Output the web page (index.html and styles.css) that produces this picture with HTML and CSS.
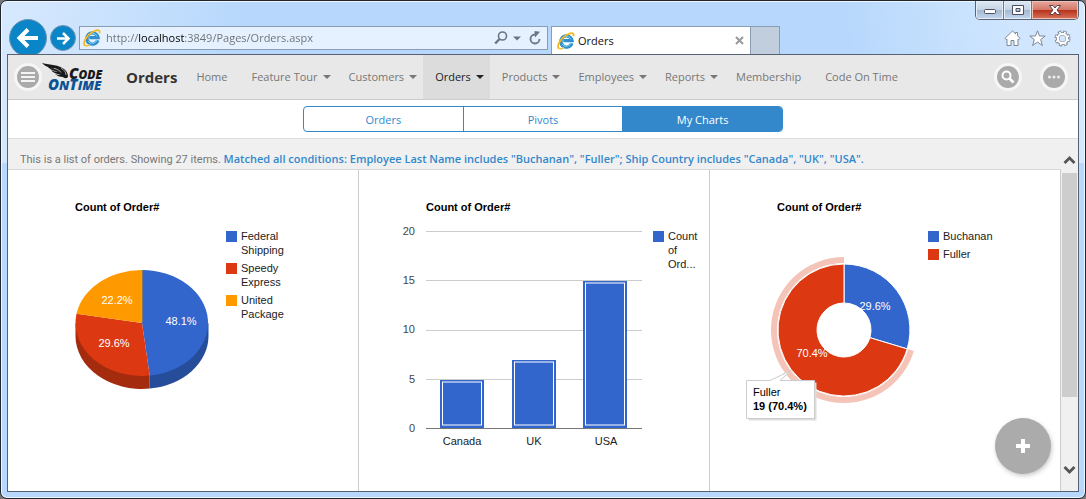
FILE: index.html
```html
<!DOCTYPE html>
<html lang="en">
<head>
<meta charset="utf-8">
<title>Orders</title>
<link rel="stylesheet" href="styles.css">
</head>
<body>
<svg class="defs" aria-hidden="true">
  <symbol id="ie" viewBox="0 0 18 18">
    <path d="M14.800 11.200 A5.600 5.600 0 1 1 15 8.600 H6.300" fill="none" stroke="#2d8fce" stroke-width="3.400"/>
    <path d="M14 11 A5 5 0 0 1 5 12 M4.800 7 A5 5 0 0 1 14 7.400" fill="none" stroke="#7fd0f5" stroke-width="1"/>
    <path d="M2.400 16.800 C-1.500 15 3.500 6.500 9.500 3 C14 .3 17.500 .5 16.400 4.300" fill="none" stroke="#f6b91c" stroke-width="1.800"/>
    <path d="M2.400 16.800 C4 17.300 6 16 7 15.200" fill="none" stroke="#f6b91c" stroke-width="1.200"/>
  </symbol>
</svg>
<div class="window">
  <header class="chrome">
    <div class="titlebar">
      <div class="window-controls">
        <button class="wc" aria-label="Minimize"><svg width="14" height="14"><rect x="1.500" y="6.500" width="11" height="4" rx="1" fill="#fff" stroke="#4b5163"/></svg></button>
        <button class="wc" aria-label="Maximize"><svg width="14" height="14"><path d="M1.500 2.500h11v9h-11z M5 5.500v3h4v-3z" fill="#fff" fill-rule="evenodd" stroke="#4b5163"/></svg></button>
        <button class="wc wc-close" aria-label="Close"><svg width="14" height="14"><path d="M1.500 2.500H5L7 5l2-2.500h3.500L9 7l3.500 4.500H9L7 9l-2 2.500H1.500L5 7z" fill="#fff" stroke="#5a3f4a"/></svg></button>
      </div>
    </div>
    <div class="toolbar">
      <button class="nav-button nav-back" aria-label="Back"><svg width="24" height="24" viewBox="0 0 24 24"><path d="M22 12H5 M12 3.500 3.500 12l8.500 8.500" fill="none" stroke="#fff" stroke-width="4"/></svg></button>
      <button class="nav-button nav-forward" aria-label="Forward"><svg width="15" height="15" viewBox="0 0 15 15"><path d="M1 7.500h11 M7 2l5.500 5.500L7 13" fill="none" stroke="#fff" stroke-width="2.500"/></svg></button>
      <form class="address">
        <svg width="18" height="18"><use href="#ie"/></svg>
        <input class="address-input" type="text" aria-label="Address" value="http://localhost:3849/Pages/Orders.aspx">
        <button class="plain" type="button" aria-label="Search"><svg width="14" height="14"><circle cx="8.500" cy="5" r="4" fill="none" stroke="#6b7681" stroke-width="1.600"/><path d="M5.500 8 1.200 12.500" stroke="#6b7681" stroke-width="2.400"/></svg></button>
        <button class="plain" type="button" aria-label="Show history"><svg width="8" height="14"><path d="M0 5.500h8L4 9.500z" fill="#6b7681"/></svg></button>
        <button class="plain refresh" type="button" aria-label="Refresh"><svg width="12" height="14"><path d="M6 3.500A4.500 4.500 0 1 0 10.500 8" fill="none" stroke="#6b7681" stroke-width="1.800"/><path d="M5.500 0 11 .8 6 6.500z" fill="#6b7681"/></svg></button>
      </form>
      <div class="tab">
        <svg width="18" height="18"><use href="#ie"/></svg>
        <span class="tab-title">Orders</span>
        <button class="plain" aria-label="Close tab"><svg width="9" height="9"><path d="M1 1l7 7M8 1 1 8" stroke="#999" stroke-width="2"/></svg></button>
      </div>
      <button class="new-tab" aria-label="New tab"></button>
      <div class="tools">
        <button class="plain" aria-label="Home"><svg width="17" height="17"><path d="M8.500 1 1 8.300l1.200 1.400.8-.6V15.500h4V10.500h3v5h4V9.100l.8.600L16 8.300 13.500 5.800V2.500h-2v1.400z" fill="#fff" stroke="#7b8896"/></svg></button>
        <button class="plain" aria-label="Favorites"><svg width="17" height="17"><path d="M8.500.8 10.500 6h5.700l-4.500 3.600 1.700 5.900-4.900-3.400-4.900 3.400 1.700-5.900L.8 6h5.700z" fill="#fff" stroke="#7b8896"/></svg></button>
        <button class="plain" aria-label="Tools"><svg width="17" height="17"><circle cx="8.500" cy="8.500" r="6.500" fill="none" stroke="#7b8896" stroke-width="3" stroke-dasharray="3.200 1.905"/><circle cx="8.500" cy="8.500" r="4.800" fill="none" stroke="#7b8896" stroke-width="3.600"/><circle cx="8.500" cy="8.500" r="6.200" fill="none" stroke="#fff" stroke-width="2" stroke-dasharray="1.600 3.270" stroke-dashoffset="-.8"/><circle cx="8.500" cy="8.500" r="4.600" fill="none" stroke="#fff" stroke-width="2.200"/></svg></button>
      </div>
    </div>
  </header>

  <div class="page">
    <header class="appbar">
      <button class="round" aria-label="Menu"><svg width="22" height="22"><path d="M4 7h14M4 11h14M4 15h14" stroke="#f4f4f4" stroke-width="2"/></svg></button>
      <a class="logo" href="#" aria-label="Code On Time">
        <svg width="66" height="32" viewBox="0 0 66 32">
          <path d="M0 2C9 4 17 4 22 8c3 2 4 5 4 8-2 2-4 1-5 0-3 0-6-1-8-3 2 1 4 1 6 1-4-1-8-2-10-5 2 1 5 2 8 2C11 10 7 8 5 5c3 2 7 3 10 3C10 7 3 6 0 2z" fill="#191919"/>
          <path d="M19 7c3 2 5 4 5 7M12 7.500c3 .5 6 2 7 4" fill="none" stroke="#ddd" stroke-width=".7"/>
          <text class="logo-code" x="27" y="18"><tspan class="logo-cap">C</tspan>ODE</text>
          <text class="logo-time" x="6" y="29"><tspan class="logo-cap">O</tspan>N<tspan class="logo-cap">T</tspan>IME</text>
        </svg>
      </a>
      <h1 class="app-title">Orders</h1>
      <nav class="menu">
        <a class="menu-item" href="#">Home</a>
        <a class="menu-item has-sub" href="#">Feature Tour</a>
        <a class="menu-item has-sub" href="#">Customers</a>
        <a class="menu-item has-sub active" href="#">Orders</a>
        <a class="menu-item has-sub" href="#">Products</a>
        <a class="menu-item has-sub" href="#">Employees</a>
        <a class="menu-item has-sub" href="#">Reports</a>
        <a class="menu-item" href="#">Membership</a>
        <a class="menu-item" href="#">Code On Time</a>
      </nav>
      <div class="actions">
        <button class="round" aria-label="Search"><svg width="22" height="22"><circle cx="9.500" cy="9.500" r="4" fill="none" stroke="#fff" stroke-width="2"/><path d="M12.500 12.500l4 4" stroke="#fff" stroke-width="2.600"/></svg></button>
        <button class="round" aria-label="More"><svg width="22" height="22" fill="#eee"><circle cx="6.500" cy="11" r="1.500"/><circle cx="11" cy="11" r="1.500"/><circle cx="15.500" cy="11" r="1.500"/></svg></button>
      </div>
    </header>

    <div class="views">
      <div class="segmented">
        <button class="segment">Orders</button>
        <button class="segment">Pivots</button>
        <button class="segment selected">My Charts</button>
      </div>
    </div>

    <main class="workspace">
      <div class="content">
        <p class="summary">This is a list of orders. Showing 27 items. <a class="filter" href="#">Matched all conditions: Employee Last Name includes "Buchanan", "Fuller"; Ship Country includes "Canada", "UK", "USA".</a></p>
        <div class="charts">
          <section class="chart">
            <svg width="350" height="300" role="img" aria-label="Orders by shipper">
              <text class="chart-title" x="67" y="41">Count of Order#</text>
              <path d="M67.500 153v13A66.500 53 0 0 0 141.700 218.600v-13z" fill="#a52b0e"/>
              <path d="M200.500 153v13A66.500 53 0 0 1 141.700 218.600v-13z" fill="#264d99"/>
              <path d="M134 153V100A66.500 53 0 0 1 141.700 205.600z" fill="#36c"/>
              <path d="M134 153L141.700 205.600A66.500 53 0 0 1 68.500 143.800z" fill="#dc3912"/>
              <path d="M134 153L68.500 143.800A66.500 53 0 0 1 134 100z" fill="#f90"/>
              <path d="M134.500 100V152" stroke="#7d7a6c"/>
              <g class="slice-label"><text x="173" y="155">48.1%</text><text x="106" y="177">29.6%</text><text x="109" y="134">22.2%</text></g>
              <rect x="218" y="61" width="11" height="11" fill="#36c"/>
              <text x="233" y="70">Federal</text><text x="233" y="84">Shipping</text>
              <rect x="218" y="93" width="11" height="11" fill="#dc3912"/>
              <text x="233" y="102">Speedy</text><text x="233" y="116">Express</text>
              <rect x="218" y="125" width="11" height="11" fill="#f90"/>
              <text x="233" y="134">United</text><text x="233" y="148">Package</text>
            </svg>
          </section>
          <section class="chart">
            <svg width="350" height="300" role="img" aria-label="Orders by country">
              <text class="chart-title" x="67" y="41">Count of Order#</text>
              <path d="M67 61.500h216M67 110.500h216M67 160.500h216M67 209.500h216" stroke="#ccc"/>
              <g fill="#36c"><rect x="81" y="210" width="44" height="48"/><rect x="153" y="190" width="44" height="68"/><rect x="224" y="111" width="44" height="147"/></g>
              <g fill="none" stroke="#fff"><rect x="83.500" y="212" width="39" height="43"/><rect x="155.500" y="192" width="39" height="63"/><rect x="226.500" y="113" width="39" height="142"/></g>
              <path d="M67 258.500h216" stroke="#777"/>
              <g class="axis-value"><text x="56" y="65">20</text><text x="56" y="114">15</text><text x="56" y="163">10</text><text x="56" y="213">5</text><text x="56" y="262">0</text></g>
              <g class="axis-name"><text x="103" y="275">Canada</text><text x="175" y="275">UK</text><text x="247" y="275">USA</text></g>
              <rect x="294" y="61" width="11" height="11" fill="#36c"/>
              <text x="309" y="70">Count</text><text x="309" y="84">of</text><text x="309" y="98">Ord...</text>
            </svg>
          </section>
          <section class="chart">
            <svg width="350" height="300" role="img" aria-label="Orders by employee">
              <text class="chart-title" x="67" y="41">Count of Order#</text>
              <path d="M203.900 180.900A73 73 0 1 1 134 87v6A67 67 0 1 0 198.200 179.200z" fill="#f5c4b8"/>
              <g stroke="#fff">
                <path d="M134 94A66 66 0 0 1 197.200 178.900L159.900 167.700A27 27 0 0 0 134 133z" fill="#36c"/>
                <path d="M197.200 178.900A66 66 0 1 1 134 94V133A27 27 0 1 0 159.900 167.700z" fill="#dc3912"/>
              </g>
              <g class="slice-label"><text x="165" y="140">29.6%</text><text x="102" y="187">70.4%</text></g>
              <path d="M38.500 212.500h68v38h-68z" fill="#ddd"/>
              <path d="M36.500 210.500H60L81 200.500 70 210.500h34.500v38h-68z" fill="#fff" stroke="#ccc"/>
              <text class="tip" x="43" y="226">Fuller</text><text class="tip tip-value" x="43" y="240">19 (70.4%)</text>
              <rect x="218" y="61" width="11" height="11" fill="#36c"/>
              <text x="233" y="70">Buchanan</text>
              <rect x="218" y="79" width="11" height="11" fill="#dc3912"/>
              <text x="233" y="88">Fuller</text>
            </svg>
          </section>
        </div>
      </div>
      <div class="scrollbar">
        <button class="plain" aria-label="Scroll up"><svg width="13" height="10"><path d="M1.500 8 6.500 3l5 5" fill="none" stroke="#555" stroke-width="2.800"/></svg></button>
        <div class="thumb"></div>
        <button class="plain" aria-label="Scroll down"><svg width="13" height="10"><path d="M1.500 2l5 5 5-5" fill="none" stroke="#555" stroke-width="2.800"/></svg></button>
      </div>
      <button class="fab" aria-label="Add"><svg width="14" height="14"><path d="M7 0v14M0 7h14" stroke="#fff" stroke-width="4"/></svg></button>
    </main>
  </div>
</div>
</body>
</html>
```
FILE: styles.css
```css
* { box-sizing: border-box; }
body { margin: 0; background: #777; font: 11px/16px "Open Sans", "Noto Sans", sans-serif; color: #777; }
button { font: inherit; padding: 0; border: 0; background: none; color: inherit; }
a { color: inherit; text-decoration: none; }
svg { display: block; flex: none; }
.defs { position: absolute; width: 0; height: 0; }

.window {
  display: flex; flex-direction: column; min-height: 100vh;
  padding: 0 6px 6px; border: 1px solid #20252e; border-radius: 7px;
  box-shadow: inset 0 0 0 1px #eef7ff;
  background:
    linear-gradient(100deg, #d6e9fe 0, #d0e5fd 60px, transparent 240px) 0 0 / 100% 162px no-repeat,
    linear-gradient(260deg, #d6e9fe 0, #cfe5fe 80px, transparent 240px) 0 0 / 100% 162px no-repeat,
    #b7d8fc;
}
.chrome { display: flex; flex-direction: column; }
.titlebar { display: flex; justify-content: flex-end; height: 24px; }
.window-controls { display: flex; height: 19px; border: 1px solid #5b6475; border-top: 0; border-radius: 0 0 5px 5px; overflow: hidden; }
.wc {
  display: flex; align-items: center; justify-content: center; width: 28px; border-right: 1px solid #6d7a8c;
  background: linear-gradient(#dfe9f5, #c5d3e4 48%, #a4b8d0 52%, #c3d7ee);
  box-shadow: inset 0 0 0 1px #e4eef9;
}
.wc-close { width: 46px; border: 0; background: linear-gradient(#e6a79b, #d4796a 48%, #b8331c 52%, #d8745a); box-shadow: inset 0 0 0 1px #efc0b5; }

.toolbar { display: flex; align-items: flex-start; height: 29px; }
.plain { display: flex; }
.nav-button { display: flex; flex: none; align-items: center; justify-content: center; border: 1px solid #6f93ad; border-radius: 50%; background: #0a86c8; }
.nav-back { width: 38px; height: 38px; margin: -6px 3px 0 2px; }
.nav-forward { width: 26px; height: 26px; margin-right: 3px; }
.address { display: flex; flex: 458; align-items: center; gap: 5px; height: 24px; margin-top: 1px; padding: 0 6px 0 3px; border: 1px solid #8b9db3; background: #e5f1fe; }
.address-input {
  flex: 1; min-width: 0; padding: 0; border: 0; outline: 0; font: inherit; color: transparent;
  background: linear-gradient(90deg, #6b7076 32px, #000 32px, #000 78px, #6b7076 78px);
  background-clip: text; -webkit-background-clip: text;
}
.refresh { margin-left: 3px; }
.tab { display: flex; flex: 187; align-items: center; gap: 3px; height: 28px; margin: 1px 0 0 3px; padding: 0 6px 0 5px; border: 1px solid #8b9db3; border-bottom: 0; background: #fff; color: #111; }
.tab-title { flex: 1; }
.new-tab { width: 29px; height: 28px; margin-top: 1px; border: 1px solid #8b9db3; border-width: 1px 1px 0 0; background: #c0cedd; }
.tools { display: flex; flex: 291; justify-content: flex-end; gap: 8px; padding: 5px 8px 0 0; }

.page { position: relative; display: flex; flex: 1; flex-direction: column; border: 1px solid #566273; background: #fff; }
.appbar { display: flex; align-items: center; height: 45px; border-bottom: 1px solid #ccc; background: #e8e8e8; }
.round { display: flex; flex: none; align-items: center; justify-content: center; width: 28px; height: 28px; border: 3px solid #f6f6f6; border-radius: 50%; background: #aaa; }
.appbar > .round { margin-left: 6px; }
.logo { width: 66px; }
.logo-code, .logo-time { font: italic 800 12px "Open Sans", sans-serif; fill: #191919; }
.logo-time { font-size: 13px; fill: #0b5296; }
.logo-cap { font-size: 15px; }
.app-title { margin: 0 7px 0 18px; font-size: 15px; line-height: 24px; font-weight: 700; color: #333; }
.menu { display: flex; align-self: stretch; }
.menu-item { display: flex; align-items: center; padding: 0 12px; white-space: nowrap; }
.has-sub { padding-right: 6px; }
.has-sub::after { content: ""; margin-left: 5px; border: 4px solid transparent; border-top-color: currentColor; border-bottom: 0; }
.active { background: #dcdcdc; color: #222; }
.actions { display: flex; gap: 18px; margin-left: auto; padding-right: 10px; }

.views { display: flex; justify-content: center; padding: 6px 0; }
.segmented { display: flex; width: 480px; height: 26px; border: 1px solid #38c; border-radius: 4px; overflow: hidden; }
.segment { flex: 1; padding-top: 1px; color: #38c; }
.segment + .segment { border-left: 1px solid #38c; }
.segment.selected { background: #38c; color: #fff; }

.workspace { position: relative; display: flex; flex: 1; border-top: 1px solid #ddd; }
.content { display: flex; flex: 1; flex-direction: column; }
.summary { margin: 0; padding: 12px 12px 1px; border-bottom: 1px solid #d8d8d8; background: #f0f0f0; font-family: Roboto, "Open Sans", sans-serif; }
.filter { font-family: "Open Sans", "Noto Sans", sans-serif; font-weight: 600; color: #38c; }
.charts { display: grid; flex: 1; grid-template-columns: repeat(3, 1fr); }
.chart { border-right: 1px solid #ccc; font: 11px/14px "Liberation Sans", Arial, sans-serif; fill: #222; overflow: hidden; }
.chart-title { font-weight: 700; fill: #000; }
.slice-label { fill: #fff; text-anchor: middle; }
.axis-value { fill: #444; text-anchor: end; }
.axis-name { text-anchor: middle; }
.tip { fill: #000; }
.tip-value { font-weight: 700; }
.scrollbar { display: flex; flex-direction: column; align-items: center; width: 17px; padding: 16px 0; background: #f0f0f0; }
.thumb { flex: 0 1 70%; width: 15px; margin: 8px 0 auto; background: #cdcdcd; }
.fab { position: absolute; right: 27px; bottom: 17px; display: flex; align-items: center; justify-content: center; width: 56px; height: 56px; border-radius: 50%; background: #ababab; box-shadow: 1px 2px 4px #9998; }
```
